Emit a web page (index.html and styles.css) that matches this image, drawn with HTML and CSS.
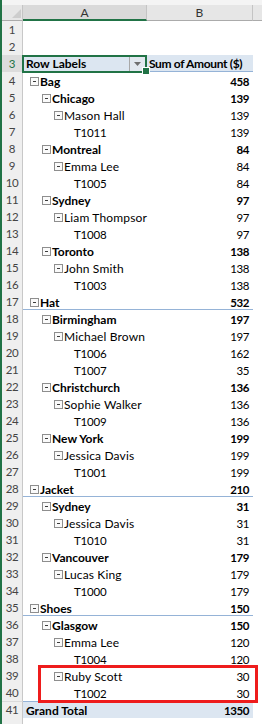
FILE: index.html
```html
<!DOCTYPE html>
<html lang="en">
<head>
<meta charset="utf-8">
<title>Pivot Table</title>
<link rel="stylesheet" href="styles.css">
</head>
<body>
<div class="sheet">
  <div class="topbar"></div>
  <div class="colhead">
    <div class="hc corner"><span class="tri"></span></div>
    <div class="hc selcol">A</div>
    <div class="hc">B</div>
    <div class="hc last"></div>
  </div>

  <div class="row"><div class="rh">1</div><div class="ca"></div><div class="cb"></div><div class="cc"></div></div>
  <div class="row"><div class="rh">2</div><div class="ca"></div><div class="cb"></div><div class="cc"></div></div>
  <div class="row hdr"><div class="rh selrow">3</div><div class="ca selcell">Row Labels<span class="dd"><svg width="7" height="4" viewBox="0 0 7 4"><path d="M0 0H7L3.5 4Z" fill="#6f6f6f"/></svg></span></div><div class="cb">Sum of Amount ($)</div><div class="cc"></div></div>

  <div class="row b"><div class="rh">4</div><div class="ca ex l0">Bag</div><div class="cb">458</div><div class="cc"></div></div>
  <div class="row b"><div class="rh">5</div><div class="ca ex l1">Chicago</div><div class="cb">139</div><div class="cc"></div></div>
  <div class="row"><div class="rh">6</div><div class="ca ex l2">Mason Hall</div><div class="cb">139</div><div class="cc"></div></div>
  <div class="row"><div class="rh">7</div><div class="ca l3">T1011</div><div class="cb">139</div><div class="cc"></div></div>
  <div class="row b"><div class="rh">8</div><div class="ca ex l1">Montreal</div><div class="cb">84</div><div class="cc"></div></div>
  <div class="row"><div class="rh">9</div><div class="ca ex l2">Emma Lee</div><div class="cb">84</div><div class="cc"></div></div>
  <div class="row"><div class="rh">10</div><div class="ca l3">T1005</div><div class="cb">84</div><div class="cc"></div></div>
  <div class="row b"><div class="rh">11</div><div class="ca ex l1">Sydney</div><div class="cb">97</div><div class="cc"></div></div>
  <div class="row"><div class="rh">12</div><div class="ca ex l2">Liam Thompsor</div><div class="cb">97</div><div class="cc"></div></div>
  <div class="row"><div class="rh">13</div><div class="ca l3">T1008</div><div class="cb">97</div><div class="cc"></div></div>
  <div class="row b"><div class="rh">14</div><div class="ca ex l1">Toronto</div><div class="cb">138</div><div class="cc"></div></div>
  <div class="row"><div class="rh">15</div><div class="ca ex l2">John Smith</div><div class="cb">138</div><div class="cc"></div></div>
  <div class="row"><div class="rh">16</div><div class="ca l3">T1003</div><div class="cb">138</div><div class="cc"></div></div>
  <div class="row b sub"><div class="rh">17</div><div class="ca ex l0">Hat</div><div class="cb">532</div><div class="cc"></div></div>
  <div class="row b"><div class="rh">18</div><div class="ca ex l1">Birmingham</div><div class="cb">197</div><div class="cc"></div></div>
  <div class="row"><div class="rh">19</div><div class="ca ex l2">Michael Brown</div><div class="cb">197</div><div class="cc"></div></div>
  <div class="row"><div class="rh">20</div><div class="ca l3">T1006</div><div class="cb">162</div><div class="cc"></div></div>
  <div class="row"><div class="rh">21</div><div class="ca l3">T1007</div><div class="cb">35</div><div class="cc"></div></div>
  <div class="row b"><div class="rh">22</div><div class="ca ex l1">Christchurch</div><div class="cb">136</div><div class="cc"></div></div>
  <div class="row"><div class="rh">23</div><div class="ca ex l2">Sophie Walker</div><div class="cb">136</div><div class="cc"></div></div>
  <div class="row"><div class="rh">24</div><div class="ca l3">T1009</div><div class="cb">136</div><div class="cc"></div></div>
  <div class="row b"><div class="rh">25</div><div class="ca ex l1">New York</div><div class="cb">199</div><div class="cc"></div></div>
  <div class="row"><div class="rh">26</div><div class="ca ex l2">Jessica Davis</div><div class="cb">199</div><div class="cc"></div></div>
  <div class="row"><div class="rh">27</div><div class="ca l3">T1001</div><div class="cb">199</div><div class="cc"></div></div>
  <div class="row b sub"><div class="rh">28</div><div class="ca ex l0">Jacket</div><div class="cb">210</div><div class="cc"></div></div>
  <div class="row b"><div class="rh">29</div><div class="ca ex l1">Sydney</div><div class="cb">31</div><div class="cc"></div></div>
  <div class="row"><div class="rh">30</div><div class="ca ex l2">Jessica Davis</div><div class="cb">31</div><div class="cc"></div></div>
  <div class="row"><div class="rh">31</div><div class="ca l3">T1010</div><div class="cb">31</div><div class="cc"></div></div>
  <div class="row b"><div class="rh">32</div><div class="ca ex l1">Vancouver</div><div class="cb">179</div><div class="cc"></div></div>
  <div class="row"><div class="rh">33</div><div class="ca ex l2">Lucas King</div><div class="cb">179</div><div class="cc"></div></div>
  <div class="row"><div class="rh">34</div><div class="ca l3">T1000</div><div class="cb">179</div><div class="cc"></div></div>
  <div class="row b sub"><div class="rh">35</div><div class="ca ex l0">Shoes</div><div class="cb">150</div><div class="cc"></div></div>
  <div class="row b"><div class="rh">36</div><div class="ca ex l1">Glasgow</div><div class="cb">150</div><div class="cc"></div></div>
  <div class="row"><div class="rh">37</div><div class="ca ex l2">Emma Lee</div><div class="cb">120</div><div class="cc"></div></div>
  <div class="row"><div class="rh">38</div><div class="ca l3">T1004</div><div class="cb">120</div><div class="cc"></div></div>
  <div class="mark">
    <div class="row"><div class="rh">39</div><div class="ca ex l2">Ruby Scott</div><div class="cb">30</div><div class="cc"></div></div>
    <div class="row"><div class="rh">40</div><div class="ca l3">T1002</div><div class="cb">30</div><div class="cc"></div></div>
  </div>
  <div class="row b gt"><div class="rh">41</div><div class="ca">Grand Total</div><div class="cb">1350</div><div class="cc"></div></div>
  <div class="row"><div class="rh"></div><div class="ca"></div><div class="cb"></div><div class="cc"></div></div>
</div>
</body>
</html>
```

FILE: styles.css
```css
* { box-sizing: border-box; }
html, body { margin: 0; padding: 0; background: #fff; }
body {
  font-family: Lato, "Liberation Sans", sans-serif;
  color: #000;
  width: 262px;
  height: 724px;
  overflow: hidden;
}
.sheet {
  border-left: 2px solid #217346;
  height: 724px;
  overflow: hidden;
}
.topbar { height: 5px; background: #f4f4f4; }
.colhead {
  display: grid;
  grid-template-columns: 21px 124px 106px 1fr;
  height: 16px;
  background: #e6e6e6;
}
.hc {
  height: 16px;
  border-right: 1px solid #c4c4c4;
  border-bottom: 1px solid #ababab;
  font-size: 12px;
  line-height: 15px;
  text-align: center;
  color: #333;
}
.hc.last { border-right: none; }
.hc.selcol { background: #d9d9d9; border-bottom: 2px solid #217346; }
.corner {
  display: flex;
  justify-content: flex-end;
  align-items: flex-end;
  padding: 0 1px 2px 0;
}
.tri {
  width: 0; height: 0;
  border-left: 9px solid transparent;
  border-bottom: 9px solid #cdcdcd;
}

.row {
  display: grid;
  grid-template-columns: 21px 124px 106px 1fr;
  height: 17px;
}
.rh {
  background: #efefef;
  border-right: 1px solid #c8c8c8;
  border-bottom: 1px solid #dadada;
  font-size: 11.5px;
  line-height: 17px;
  text-align: center;
  color: #444;
  letter-spacing: -0.3px;
}
.rh.selrow { background: #dcdcdc; color: #217346; }

.ca {
  display: flex;
  align-items: center;
  height: 17px;
  padding-top: 2px;
  line-height: 15px;
  font-size: 12px;
  white-space: nowrap;
  letter-spacing: 0.15px;
}
.cb {
  height: 17px;
  padding: 2px 4px 0 0;
  line-height: 15px;
  text-align: right;
  font-size: 11.5px;
  letter-spacing: -0.4px;
  white-space: nowrap;
}
.row.b .ca { font-weight: bold; letter-spacing: 0; }
.row.b .cb { font-weight: bold; }

.ca.ex::before {
  content: "";
  flex: none;
  width: 7px;
  height: 7px;
  margin-right: 1px;
  border: 1px solid #8e8e8e;
  background: linear-gradient(#3c3c3c, #3c3c3c) center / 3px 1px no-repeat, #fafafa;
}
.l0 { padding-left: 7px; }
.l1 { padding-left: 19px; }
.l2 { padding-left: 31px; }
.l3 { padding-left: 51px; letter-spacing: -0.2px !important; font-size: 11.5px; }

.row.sub .ca, .row.sub .cb { border-bottom: 1px solid #95b3d7; }

.row.hdr .ca, .row.hdr .cb {
  background: #dce6f1;
  border-bottom: 1px solid #95b3d7;
  font-weight: bold;
  font-size: 12px;
  letter-spacing: 0;
}
.row.hdr .ca { padding-left: 3px; padding-right: 2px; padding-top: 1px; }
.row.hdr .cb { text-align: left; padding-left: 2px; padding-top: 1px; letter-spacing: -0.35px; }

.selcell { position: relative; }
.selcell::before {
  content: "";
  position: absolute;
  top: 0; left: -1px; right: 0; bottom: -2px;
  border: 2px solid #217346;
  pointer-events: none;
}
.selcell::after {
  content: "";
  position: absolute;
  right: -3px; bottom: -4px;
  width: 6px; height: 6px;
  background: #217346;
  border: 1px solid #fff;
}
.dd {
  margin-left: auto;
  width: 16px;
  height: 14px;
  border-left: 1px solid #a8a8a8;
  background: #e2e8ef;
  display: flex;
  align-items: center;
  justify-content: center;
}
.dd svg { display: block; }

.row.gt .ca, .row.gt .cb {
  background: #dce6f1;
  border-top: 1px solid #95b3d7;
  padding-top: 1px;
}
.row.gt .ca { padding-left: 3px; }

.mark { position: relative; }
.mark::after {
  content: "";
  position: absolute;
  left: 36px; right: 4px; top: -2px; bottom: -2px;
  border: 3px solid #ee1c1c;
  pointer-events: none;
}
```
